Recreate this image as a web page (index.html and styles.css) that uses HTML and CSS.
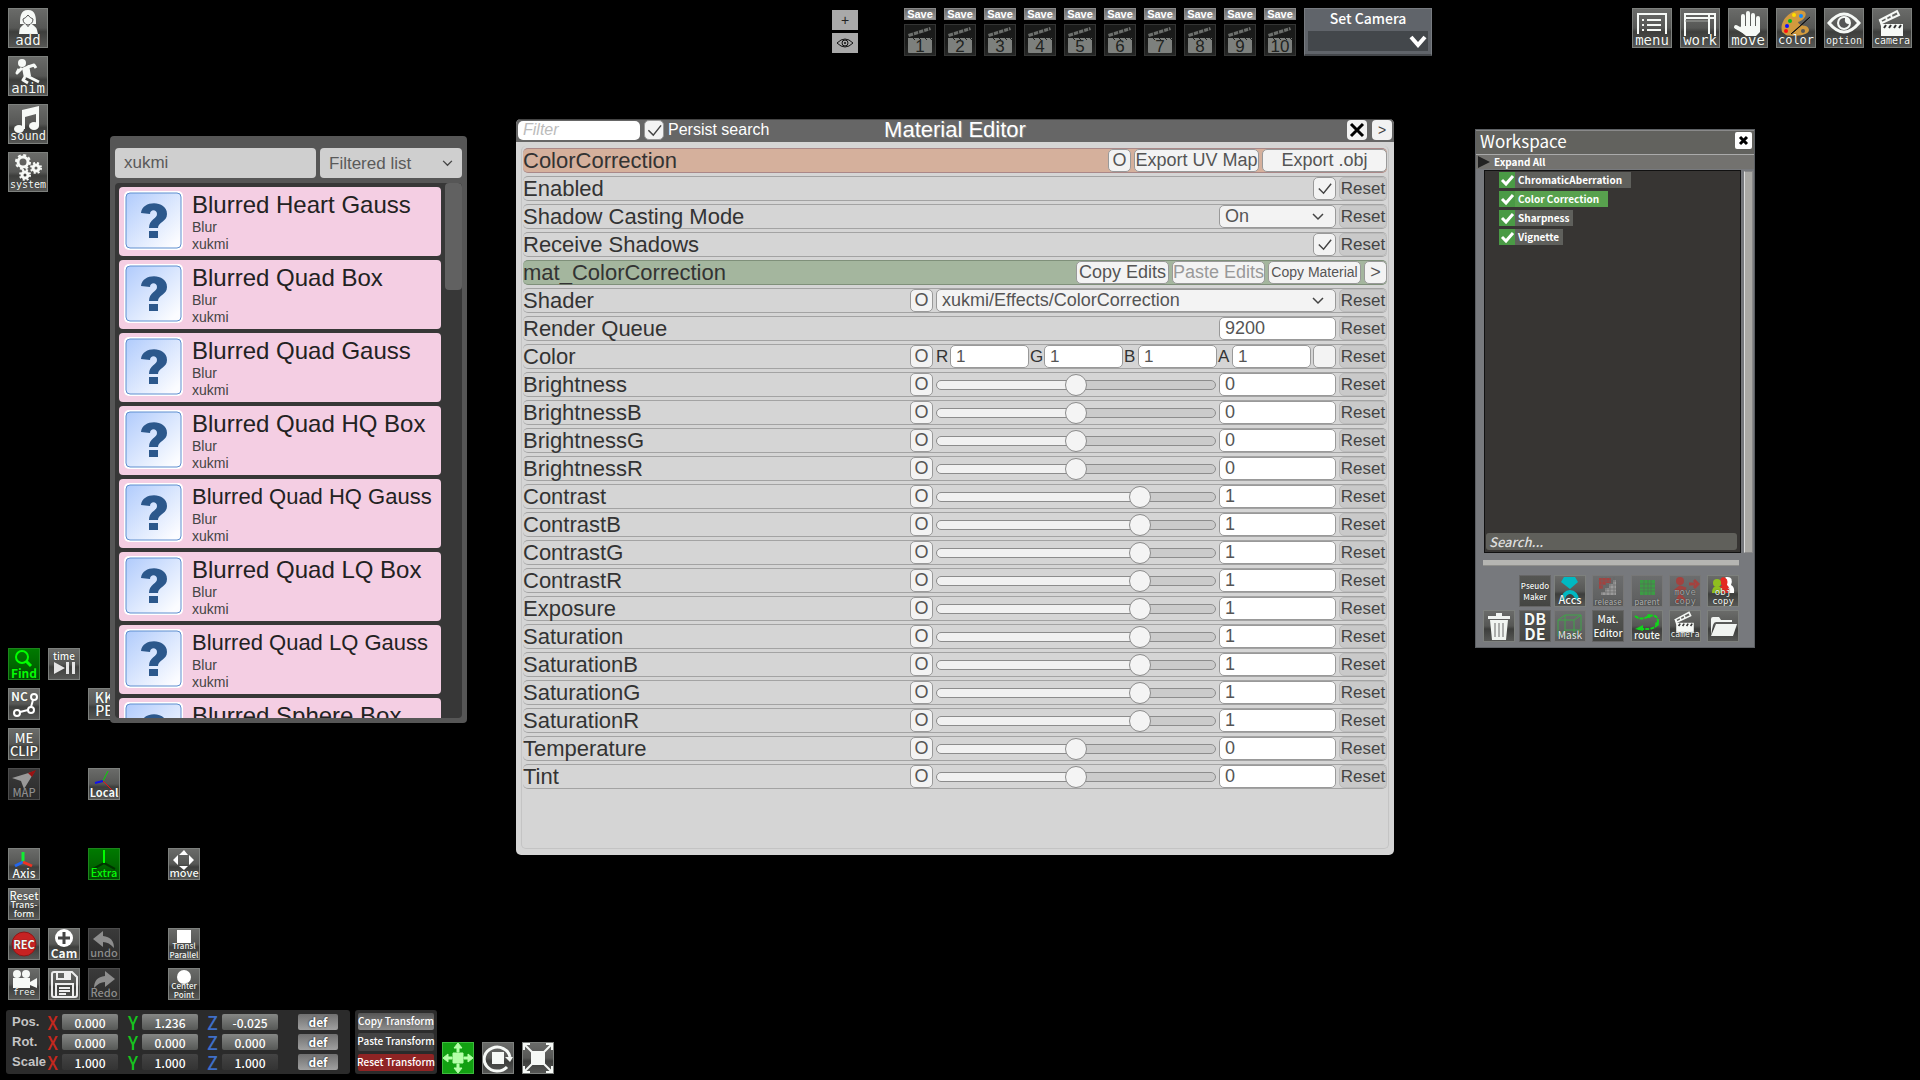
FILE: index.html
```
<!DOCTYPE html>
<html lang="en">
<head>
<meta charset="utf-8">
<title>Studio</title>
<link rel="stylesheet" href="styles.css">
</head>
<body>
<svg class="defs" aria-hidden="true">
  <defs>
    <linearGradient id="paper" x1="0" y1="0" x2="1" y2="1"><stop offset="0" stop-color="#b0cbfc"/><stop offset=".9" stop-color="#fbfcff"/></linearGradient>
  </defs>
  <symbol id="slate" viewBox="0 0 32 32">
    <path d="M4 14H28V28Q28 29 27 29H5Q4 29 4 28Z" fill="#7d807d"/>
    <path d="M4 10 26 3 27 6 5 13Z" fill="#6c6f6c"/>
    <path d="M9 8 10 12M14 6 15 10M19 4 20 8M24 3 25 7M8 13 11 16M14 13 17 16M20 13 23 16M25 13 28 16" fill="none" stroke="#1d1e1d" stroke-width="1"/>
  </symbol>
  <symbol id="clapper" viewBox="0 0 40 40">
    <path d="M9 16H31V28H9Z" fill="#f6f9f6"/>
    <path d="M8 12 25 3 27 7 10 15Z" fill="none" stroke="#f6f9f6" stroke-width="2"/>
    <path d="M14 9 15 13M19 7 20 10M8 12 10 18" stroke="#f6f9f6" stroke-width="2"/>
    <path d="M12 20 14 17M17 20 19 17M22 20 24 17M27 20 29 17" stroke="#333" stroke-width="2"/>
  </symbol>
  <symbol id="unknown" viewBox="0 0 59 59">
    <rect width="59" height="59" rx="5" fill="#fff"/>
    <rect x="2" y="2" width="55" height="55" rx="4" fill="url(#paper)" stroke="#5f8fcf"/>
    <path d="M17 22C18 9 43 9 43 23 43 31 34 31 34 37H25C25 28 33 28 33 23 33 18 26 18 26 23ZM25 40H34V47H25Z" fill="#2c588c"/>
  </symbol>
</svg>

<nav class="side-tools" aria-label="Scene">
  <button class="tile large"><svg viewBox="0 0 40 40"><path d="M12 16C12 10 12 2 20 2S28 10 28 16H25Q20 19 15 16Z" fill="#f6f9f6"/><path d="M15 11Q18 10 20 7 22 10 25 11 25 16 20 17 15 16 15 11Z" fill="#f6f9f6" stroke="#555"/><path d="M11 26Q11 18 17 16L20 19 23 16Q29 18 30 26Z" fill="#f6f9f6"/></svg><span class="mono-m">add</span></button>
  <button class="tile large"><svg viewBox="0 0 40 40"><circle cx="14" cy="7" r="4" fill="#f6f9f6"/><path d="M20 11 26 9 28 12M19 20 31 26M17 21 15 24 20 27M14 12 9 17 11 13" fill="none" stroke="#f6f9f6" stroke-width="3" stroke-linejoin="round"/><path d="M14 12 21 9 23 20 16 22Z" fill="#f6f9f6"/></svg><span class="mono-m">anim</span></button>
  <button class="tile large"><svg viewBox="0 0 40 40"><path d="M14 6 31 2V22H28V10L17 13V25H14Z" fill="#f6f9f6"/><ellipse cx="11" cy="25" rx="5" ry="4" fill="#f6f9f6"/><ellipse cx="26" cy="22" rx="5" ry="4" fill="#f6f9f6"/></svg><span class="mono-s">sound</span></button>
  <button class="tile large"><svg viewBox="0 0 40 40" fill="none" stroke="#f6f9f6"><circle cx="15" cy="10" r="5" stroke-width="3"/><circle cx="15" cy="10" r="7" stroke-width="2" stroke-dasharray="3 2.5"/><circle cx="28" cy="16" r="3" stroke-width="3"/><circle cx="28" cy="16" r="5" stroke-width="2" stroke-dasharray="2 2"/><circle cx="17" cy="23" r="3" stroke-width="3"/><circle cx="17" cy="23" r="5" stroke-width="2" stroke-dasharray="2 2"/></svg><span class="mono-xs">system</span></button>
</nav>

<div class="view-tools">
  <button aria-label="Add slot">+</button>
  <button aria-label="Toggle view"><svg viewBox="0 0 18 10" width="18" height="10"><path d="M1 5Q9-3 17 5 9 13 1 5Z" fill="none" stroke="#111"/><circle cx="9" cy="5" r="3" fill="none" stroke="#111"/><circle cx="9" cy="5" r="1" fill="#111"/></svg></button>
</div>

<header class="camera-bar">
  <div class="slot"><button class="save">Save</button><button class="tile shot"><svg><use href="#slate"/></svg><span>1</span></button></div>
  <div class="slot"><button class="save">Save</button><button class="tile shot"><svg><use href="#slate"/></svg><span>2</span></button></div>
  <div class="slot"><button class="save">Save</button><button class="tile shot"><svg><use href="#slate"/></svg><span>3</span></button></div>
  <div class="slot"><button class="save">Save</button><button class="tile shot"><svg><use href="#slate"/></svg><span>4</span></button></div>
  <div class="slot"><button class="save">Save</button><button class="tile shot"><svg><use href="#slate"/></svg><span>5</span></button></div>
  <div class="slot"><button class="save">Save</button><button class="tile shot"><svg><use href="#slate"/></svg><span>6</span></button></div>
  <div class="slot"><button class="save">Save</button><button class="tile shot"><svg><use href="#slate"/></svg><span>7</span></button></div>
  <div class="slot"><button class="save">Save</button><button class="tile shot"><svg><use href="#slate"/></svg><span>8</span></button></div>
  <div class="slot"><button class="save">Save</button><button class="tile shot"><svg><use href="#slate"/></svg><span>9</span></button></div>
  <div class="slot"><button class="save">Save</button><button class="tile shot"><svg><use href="#slate"/></svg><span>10</span></button></div>
  <div class="set-camera"><label for="camera-set">Set Camera</label><select id="camera-set"><option></option></select></div>
</header>

<nav class="main-tools" aria-label="Main">
  <button class="tile large"><svg viewBox="0 0 40 40"><path d="M6 26V6H34V26M15 12H29M15 17H29M15 22H29M10 12H12M10 17H12M10 22H12" fill="none" stroke="#f6f9f6" stroke-width="2"/></svg><span class="mono-m">menu</span></button>
  <button class="tile large"><svg viewBox="0 0 40 40"><path d="M5 28V6H35V28M5 10H35M29 6V26" fill="none" stroke="#f6f9f6" stroke-width="2"/><path d="M5 13H28" stroke="#a3a5a1"/></svg><span class="mono-m">work</span></button>
  <button class="tile large"><svg viewBox="0 0 40 40"><path d="M15 20V8M20 19V5M25 20V7M30 22V10M17 24 8 19" stroke="#f6f9f6" stroke-width="4" stroke-linecap="round"/><path d="M13 18H32V24L28 28H18L11 22Z" fill="#f6f9f6"/></svg><span class="mono-m">move</span></button>
  <button class="tile large"><svg viewBox="0 0 40 40"><path d="M6 24C3 12 16 0 27 3 33 5 28 13 22 14 24 20 32 15 33 22 33 28 15 29 10 27Z" fill="#d19a3e"/><circle cx="18" cy="7" r="2" fill="#fd0"/><circle cx="25" cy="8" r="2" fill="#18f"/><circle cx="14" cy="13" r="2" fill="#0b2"/><circle cx="11" cy="18" r="2" fill="#11f"/><circle cx="10" cy="23" r="2" fill="#f11"/><circle cx="27" cy="23" r="2" fill="#555"/><path d="M15 26 34 9 20 22Z" stroke="#111" stroke-width="1"/></svg><span class="mono-s">color</span></button>
  <button class="tile large"><svg viewBox="0 0 40 40"><path d="M5 15Q20-3 35 15 20 33 5 15Z" fill="none" stroke="#f6f9f6" stroke-width="3"/><circle cx="20" cy="15" r="7" fill="#f6f9f6"/><path d="M21 10A5 5 0 1 0 25 16Q20 16 21 10Z" fill="#555"/></svg><span class="mono-xs">option</span></button>
  <button class="tile large"><svg><use href="#clapper"/></svg><span class="mono-xs">camera</span></button>
</nav>

<div class="tool-grid">
  <button class="tile on r1 c1"><svg viewBox="0 0 32 32" fill="none" stroke="#0f0"><circle cx="14" cy="9" r="6" stroke-width="2"/><path d="M18 13 23 18" stroke-width="3"/></svg><span class="t12 b">Find</span></button>
  <button class="tile r1 c2"><svg viewBox="0 0 32 32"><path d="M6 14 17 20 6 26ZM18 14H21V26H18ZM24 14H27V26H24Z" fill="#e4e4e4"/></svg><span class="t10 top">time</span></button>
  <button class="tile r2 c1"><svg viewBox="0 0 32 32" fill="none" stroke="#fff" stroke-width="2"><circle cx="26" cy="9" r="3"/><circle cx="23" cy="22" r="3"/><circle cx="9" cy="25" r="3"/><path d="M25 12 23 19M20 22 12 24"/></svg><span class="t12 b top left">NC</span></button>
  <button class="tile r2 c3"><span class="t14 two">KK<br>PE</span></button>
  <button class="tile r3 c1"><span class="t13 two">ME<br>CLIP</span></button>
  <button class="tile off r4 c1"><svg viewBox="0 0 32 32"><path d="M4 10 27 3 16 21 13 13Z" fill="#999"/><path d="M20 5 28 2 24 9Z" fill="#911"/></svg><span class="t11">MAP</span></button>
  <button class="tile r4 c3"><svg viewBox="0 0 32 32"><path d="M15 13 20 3" stroke="#0d0"/><path d="M15 13 7 15" stroke="#11e" stroke-width="2"/><path d="M15 13 25 23" stroke="#e11"/></svg><span class="t11 b">Local</span></button>
  <button class="tile r6 c1"><svg viewBox="0 0 32 32" stroke-width="3"><path d="M15 14V4" stroke="#1e3"/><path d="M15 14 7 18" stroke="#26e"/><path d="M15 14 24 18" stroke="#e32"/></svg><span class="t12">Axis</span></button>
  <button class="tile on r6 c3"><svg viewBox="0 0 32 32"><path d="M16 15 5 21M16 15 27 21" stroke="#030" stroke-width="2"/><path d="M16 15V2" stroke="#0f0" stroke-width="2"/></svg><span class="t11">Extra</span></button>
  <button class="tile r6 c5"><svg viewBox="0 0 32 32" fill="#fff"><path d="M16 2 20 7H11ZM16 22 20 18H11ZM5 12 10 7V17ZM26 12 21 7V17Z"/></svg><span class="t11">move</span></button>
  <button class="tile r7 c1"><span class="t11 three">Reset<small>Trans-</small><small>form</small></span></button>
  <button class="tile r8 c1"><svg viewBox="0 0 32 32"><circle cx="16" cy="16" r="12" fill="#c62222" stroke="#8d1717"/></svg><span class="t11 b mid">REC</span></button>
  <button class="tile r8 c2"><svg viewBox="0 0 32 32"><circle cx="16" cy="10" r="9" fill="#fff"/><path d="M16 4V16M10 10H22" stroke="#444" stroke-width="3"/></svg><span class="t12 b">Cam</span></button>
  <button class="tile off r8 c3"><svg viewBox="0 0 32 32"><path d="M5 11 15 3V8Q26 9 26 20 21 14 15 14V19Z" fill="#8d8d8d"/></svg><span class="t11">undo</span></button>
  <button class="tile r8 c5"><svg viewBox="0 0 32 32"><path d="M9 2H23V15H9Z" fill="#fff"/></svg><span class="t8">Transl<br>Parallel</span></button>
  <button class="tile r9 c1"><svg viewBox="0 0 32 32" fill="#f6f9f6"><circle cx="9" cy="6" r="4"/><circle cx="18" cy="6" r="4"/><path d="M5 10H22V20H5ZM22 14 29 10V20L22 17Z"/></svg><span class="mono-t">free</span></button>
  <button class="tile r9 c2" aria-label="Save scene"><svg viewBox="0 0 32 32" fill="none" stroke="#eee" stroke-width="2"><path d="M4 6Q4 4 6 4H24L29 9V27Q29 29 27 29H6Q4 29 4 27ZM9 4V11H22V4M8 29V16H25V29M11 20H22M11 23H22M11 26H18"/><path d="M17 5H21V10H17Z" fill="#eee"/></svg></button>
  <button class="tile off r9 c3"><svg viewBox="0 0 32 32"><path d="M27 11 17 3V8Q6 9 6 20 11 14 17 14V19Z" fill="#8d8d8d"/></svg><span class="t11">Redo</span></button>
  <button class="tile r9 c5"><svg viewBox="0 0 32 32"><circle cx="16" cy="9" r="7" fill="#fff"/></svg><span class="t8">Center<br>Point</span></button>
</div>

<footer class="transform-bar">
  <form class="transform">
    <span class="name">Pos.</span>
    <label class="x" for="px">X</label><input id="px" value="0.000"><label class="y" for="py">Y</label><input id="py" value="1.236"><label class="z" for="pz">Z</label><input id="pz" value="-0.025"><button type="button">def</button>
    <span class="name">Rot.</span>
    <label class="x" for="rx">X</label><input id="rx" value="0.000"><label class="y" for="ry">Y</label><input id="ry" value="0.000"><label class="z" for="rz">Z</label><input id="rz" value="0.000"><button type="button">def</button>
    <span class="name">Scale</span>
    <label class="x" for="sx">X</label><input class="dim" id="sx" value="1.000"><label class="y" for="sy">Y</label><input class="dim" id="sy" value="1.000"><label class="z" for="sz">Z</label><input class="dim" id="sz" value="1.000"><button type="button">def</button>
  </form>
  <div class="transform-actions">
    <button class="copy">Copy Transform</button>
    <button class="paste">Paste Transform</button>
    <button class="reset-all">Reset Transform</button>
  </div>
  <div class="gizmos">
    <button class="tile lit" aria-label="Move"><svg viewBox="0 0 32 32" fill="#b4ffa8"><path d="M11 11H21V21H11ZM16 1 20 6H17V10H15V6H12ZM16 31 20 26H17V22H15V26H12ZM1 16 6 12V15H10V17H6V20ZM31 16 26 12V15H22V17H26V20Z" stroke="#b4ffa8"/></svg></button>
    <button class="tile" aria-label="Rotate"><svg viewBox="0 0 32 32"><path d="M10 10H22V22H10Z" fill="#f6f9f6"/><path d="M25 25A13 12 0 1 1 28 15" fill="none" stroke="#f6f9f6" stroke-width="3"/><path d="M23 15H31L28 20Z" fill="#f6f9f6"/></svg></button>
    <button class="tile" aria-label="Scale"><svg viewBox="0 0 32 32"><path d="M9 9H23V23H9Z" fill="#f6f9f6"/><path d="M3 3 29 29M29 3 3 29M2 8V2H8M24 2H30V8M30 24V30H24M8 30H2V24" fill="none" stroke="#f6f9f6" stroke-width="2"/></svg></button>
  </div>
</footer>

<section class="finder" aria-label="Item search">
  <div class="finder-head">
    <input type="text" value="xukmi" aria-label="Search items">
    <select aria-label="List"><option>Filtered list</option></select>
  </div>
  <div class="finder-body">
    <ul>
      <li><svg><use href="#unknown"/></svg><div><h3>Blurred Heart Gauss</h3><p>Blur</p><p>xukmi</p></div></li>
      <li><svg><use href="#unknown"/></svg><div><h3>Blurred Quad Box</h3><p>Blur</p><p>xukmi</p></div></li>
      <li><svg><use href="#unknown"/></svg><div><h3>Blurred Quad Gauss</h3><p>Blur</p><p>xukmi</p></div></li>
      <li><svg><use href="#unknown"/></svg><div><h3>Blurred Quad HQ Box</h3><p>Blur</p><p>xukmi</p></div></li>
      <li><svg><use href="#unknown"/></svg><div><h3 class="long">Blurred Quad HQ Gauss</h3><p>Blur</p><p>xukmi</p></div></li>
      <li><svg><use href="#unknown"/></svg><div><h3>Blurred Quad LQ Box</h3><p>Blur</p><p>xukmi</p></div></li>
      <li><svg><use href="#unknown"/></svg><div><h3 class="long">Blurred Quad LQ Gauss</h3><p>Blur</p><p>xukmi</p></div></li>
      <li><svg><use href="#unknown"/></svg><div><h3>Blurred Sphere Box</h3><p>Blur</p><p>xukmi</p></div></li>
    </ul>
    <div class="scrollbar"></div>
  </div>
</section>

<section class="editor" aria-label="Material Editor">
  <div class="editor-head">
    <div class="filter"><input type="text" placeholder="Filter" aria-label="Filter"><input type="checkbox" id="persist" checked><label for="persist">Persist search</label></div>
    <h2>Material Editor</h2>
    <div class="window-buttons">
      <button aria-label="Close"><svg viewBox="0 0 18 18" width="18" height="18"><path d="M3 3 15 15M15 3 3 15" stroke="#000" stroke-width="3"/></svg></button>
      <button>&gt;</button>
    </div>
  </div>
  <div class="rows">
    <div class="row renderer"><span class="label">ColorCorrection</span><button class="sq">O</button><button class="export">Export UV Map</button><button class="export">Export .obj</button></div>
    <div class="row"><label for="enabled">Enabled</label><input type="checkbox" id="enabled" checked><button class="reset">Reset</button></div>
    <div class="row"><label for="casting">Shadow Casting Mode</label><select id="casting" class="value"><option>On</option></select><button class="reset">Reset</button></div>
    <div class="row"><label for="receive">Receive Shadows</label><input type="checkbox" id="receive" checked><button class="reset">Reset</button></div>
    <div class="row material"><span class="label">mat_ColorCorrection</span><button class="edit">Copy Edits</button><button class="edit" disabled>Paste Edits</button><button class="edit small">Copy Material</button><button class="sq">&gt;</button></div>
    <div class="row"><label for="shader">Shader</label><button class="sq">O</button><select id="shader" class="shader"><option>xukmi/Effects/ColorCorrection</option></select><button class="reset">Reset</button></div>
    <div class="row"><label for="queue">Render Queue</label><input type="text" id="queue" class="value" value="9200"><button class="reset">Reset</button></div>
    <div class="row"><span class="label">Color</span><button class="sq">O</button><div class="channels"><label for="cr">R</label><input type="text" id="cr" value="1"><label for="cg">G</label><input type="text" id="cg" value="1"><label for="cb">B</label><input type="text" id="cb" value="1"><label for="ca">A</label><input type="text" id="ca" value="1"></div><button class="sq" aria-label="Pick color"></button><button class="reset">Reset</button></div>
    <div class="row"><label for="s1">Brightness</label><button class="sq">O</button><input type="range" id="s1" min="-2" max="2" value="0" style="--fill:50%"><input type="text" class="value" aria-label="Brightness value" value="0"><button class="reset">Reset</button></div>
    <div class="row"><label for="s2">BrightnessB</label><button class="sq">O</button><input type="range" id="s2" min="-2" max="2" value="0" style="--fill:50%"><input type="text" class="value" aria-label="BrightnessB value" value="0"><button class="reset">Reset</button></div>
    <div class="row"><label for="s3">BrightnessG</label><button class="sq">O</button><input type="range" id="s3" min="-2" max="2" value="0" style="--fill:50%"><input type="text" class="value" aria-label="BrightnessG value" value="0"><button class="reset">Reset</button></div>
    <div class="row"><label for="s4">BrightnessR</label><button class="sq">O</button><input type="range" id="s4" min="-2" max="2" value="0" style="--fill:50%"><input type="text" class="value" aria-label="BrightnessR value" value="0"><button class="reset">Reset</button></div>
    <div class="row"><label for="s5">Contrast</label><button class="sq">O</button><input type="range" id="s5" min="-2" max="2" value="1" style="--fill:75%"><input type="text" class="value" aria-label="Contrast value" value="1"><button class="reset">Reset</button></div>
    <div class="row"><label for="s6">ContrastB</label><button class="sq">O</button><input type="range" id="s6" min="-2" max="2" value="1" style="--fill:75%"><input type="text" class="value" aria-label="ContrastB value" value="1"><button class="reset">Reset</button></div>
    <div class="row"><label for="s7">ContrastG</label><button class="sq">O</button><input type="range" id="s7" min="-2" max="2" value="1" style="--fill:75%"><input type="text" class="value" aria-label="ContrastG value" value="1"><button class="reset">Reset</button></div>
    <div class="row"><label for="s8">ContrastR</label><button class="sq">O</button><input type="range" id="s8" min="-2" max="2" value="1" style="--fill:75%"><input type="text" class="value" aria-label="ContrastR value" value="1"><button class="reset">Reset</button></div>
    <div class="row"><label for="s9">Exposure</label><button class="sq">O</button><input type="range" id="s9" min="-2" max="2" value="1" style="--fill:75%"><input type="text" class="value" aria-label="Exposure value" value="1"><button class="reset">Reset</button></div>
    <div class="row"><label for="s10">Saturation</label><button class="sq">O</button><input type="range" id="s10" min="-2" max="2" value="1" style="--fill:75%"><input type="text" class="value" aria-label="Saturation value" value="1"><button class="reset">Reset</button></div>
    <div class="row"><label for="s11">SaturationB</label><button class="sq">O</button><input type="range" id="s11" min="-2" max="2" value="1" style="--fill:75%"><input type="text" class="value" aria-label="SaturationB value" value="1"><button class="reset">Reset</button></div>
    <div class="row"><label for="s12">SaturationG</label><button class="sq">O</button><input type="range" id="s12" min="-2" max="2" value="1" style="--fill:75%"><input type="text" class="value" aria-label="SaturationG value" value="1"><button class="reset">Reset</button></div>
    <div class="row"><label for="s13">SaturationR</label><button class="sq">O</button><input type="range" id="s13" min="-2" max="2" value="1" style="--fill:75%"><input type="text" class="value" aria-label="SaturationR value" value="1"><button class="reset">Reset</button></div>
    <div class="row"><label for="s14">Temperature</label><button class="sq">O</button><input type="range" id="s14" min="-2" max="2" value="0" style="--fill:50%"><input type="text" class="value" aria-label="Temperature value" value="0"><button class="reset">Reset</button></div>
    <div class="row"><label for="s15">Tint</label><button class="sq">O</button><input type="range" id="s15" min="-2" max="2" value="0" style="--fill:50%"><input type="text" class="value" aria-label="Tint value" value="0"><button class="reset">Reset</button></div>
  </div>
</section>

<section class="workspace" aria-label="Workspace">
  <div class="workspace-head"><h2>Workspace</h2><button aria-label="Close"><svg viewBox="0 0 17 17" width="17" height="17"><path d="M5 5 12 12M12 5 5 12" stroke="#000" stroke-width="3"/></svg></button></div>
  <button class="expand"><svg viewBox="0 0 12 12" width="12" height="12"><path d="M0 0 12 6 0 12Z" fill="#222"/></svg>Expand All</button>
  <div class="workspace-body">
    <div class="tree">
      <ul>
        <li><input type="checkbox" id="n1" checked><label for="n1" class="wide">ChromaticAberration</label></li>
        <li class="selected"><input type="checkbox" id="n2" checked><label for="n2" class="wide">Color Correction</label></li>
        <li><input type="checkbox" id="n3" checked><label for="n3">Sharpness</label></li>
        <li><input type="checkbox" id="n4" checked><label for="n4">Vignette</label></li>
      </ul>
      <input type="text" placeholder="Search..." aria-label="Search workspace">
    </div>
    <div class="vbar"></div>
  </div>
  <div class="hbar"></div>
  <div class="workspace-tools">
    <button class="tile flat c2"><span class="t8 mid lh11">Pseudo<br>Maker</span></button>
    <button class="tile"><svg viewBox="0 0 32 32"><path d="M10 2H21L24 7 16 14 7 7Z" fill="#00b9c2"/><path d="M9 25A7 8 0 1 1 23 25" fill="none" stroke="#00b9c2" stroke-width="4"/></svg><span class="t11">Accs</span></button>
    <button class="tile ghost"><svg viewBox="0 0 32 32"><path d="M7 3H19V8H14V10H11V14H7Z" fill="#a3423f"/><path d="M21 5H24V20H9V17H13V13H17V9H21Z" fill="#9b9b9b"/><path d="M10 2V20M14 2V20M18 2V20M22 2V20M6 6H25M6 10H25M6 14H25M6 17H25" stroke="#646464" stroke-width=".6"/></svg><span class="t8">release</span></button>
    <button class="tile ghost"><svg viewBox="0 0 32 32"><path d="M9 5H24V20H9Z" fill="#3c9c45"/><path d="M13 5V20M17 5V20M20 5V20M9 9H24M9 13H24M9 16H24" stroke="#5c665c" stroke-width=".6"/></svg><span class="t8">parent</span></button>
    <button class="tile ghost"><svg viewBox="0 0 32 32"><circle cx="11" cy="6" r="4" fill="#a3423f"/><path d="M6 16 11 12 17 14M11 12V20L7 28M11 20 17 27M20 9H26M25 5 29 9 25 13" fill="none" stroke="#a3423f" stroke-width="3"/></svg><span class="mono-t tight">move<br>copy</span></button>
    <button class="tile"><svg viewBox="0 0 32 32"><path d="M15 18Q15 12 18 11 14 6 19 2 27 1 24 10 28 12 27 18Z" fill="#fff"/><path d="M11 18Q11 12 15 11 11 4 16 2 22 3 20 10 23 12 22 18Z" fill="#e32a22"/><circle cx="10" cy="8" r="4" fill="#8fbf1f"/><path d="M5 18Q5 11 10 11T15 18Z" fill="#8fbf1f"/></svg><span class="mono-t tight">obj<br>copy</span></button>
    <button class="tile c1" aria-label="Delete"><svg viewBox="0 0 32 32"><path d="M7 10H25L23 30H9ZM5 6H27V9H5ZM13 3H19V6H13Z" fill="#f1f4f1"/><path d="M12 13V27M16 13V27M20 13V27" stroke="#666" stroke-width="1"/></svg></button>
    <button class="tile flat"><span class="t16 b mid">DB<br>DE</span></button>
    <button class="tile ghost lighter"><svg viewBox="0 0 32 32" fill="none" stroke="#3fa548"><path d="M4 10H20V26H4ZM11 5H27V20H11ZM4 10 11 5M20 10 27 5M4 26 11 20M20 26 27 20"/></svg><span class="t10">Mask</span></button>
    <button class="tile flat"><span class="t10 mid lh15">Mat.<br>Editor</span></button>
    <button class="tile"><svg viewBox="0 0 32 32"><path d="M4 6Q10 11 18 6 27 4 27 12 26 18 18 19L7 19" fill="none" stroke="#12d31c" stroke-width="2" stroke-dasharray="4 1"/><path d="M4 19 12 15V21Z" fill="#12d31c"/><circle cx="18" cy="6" r="2" fill="#12d31c"/><circle cx="26" cy="14" r="2" fill="#12d31c"/></svg><span class="t10">route</span></button>
    <button class="tile"><svg><use href="#clapper"/></svg><span class="mono-c">camera</span></button>
    <button class="tile" aria-label="Open folder"><svg viewBox="0 0 32 32" fill="#f1f4f1"><path d="M4 25V9Q4 7 6 7H12L14 10H25V12H9Q7 12 6 15Z"/><path d="M9 14H30L26 26H4Z"/></svg></button>
  </div>
</section>
</body>
</html>
```
FILE: styles.css
```
:root {
  --ui: "Liberation Sans", Arial, sans-serif;
  --gothic: "Noto Sans CJK JP", "Noto Sans", sans-serif;
  --mono: "DejaVu Sans Mono", monospace;
  --check: url("data:image/svg+xml,%3Csvg xmlns='http://www.w3.org/2000/svg' viewBox='0 0 20 20'%3E%3Cpath d='M4 10L9 15L17 5' fill='none' stroke='%23444' stroke-width='1.5'/%3E%3C/svg%3E");
  --chevron: url("data:image/svg+xml,%3Csvg xmlns='http://www.w3.org/2000/svg' viewBox='0 0 12 8'%3E%3Cpath d='M1 1L6 6L11 1' fill='none' stroke='%23444' stroke-width='1.5'/%3E%3C/svg%3E");
}
* { box-sizing: border-box; }
body { margin: 0; min-height: 100vh; background: #000; font-family: var(--ui); overflow: hidden; position: relative; }
button, input, select { font: inherit; color: inherit; margin: 0; padding: 0; border: 0; border-radius: 0; appearance: none; min-width: 0; }
h2, h3, p, ul { margin: 0; padding: 0; font-weight: 400; }
ul { list-style: none; }
.defs { position: absolute; width: 0; height: 0; }

/* Icon tiles */
.tile {
  display: grid; width: 32px; height: 32px; overflow: hidden; color: #f6f9f6;
  border: 1px solid #7d807d;
  background: linear-gradient(#6a6b69, #565755 50%, #3d3e3c 60%, #565755);
  font-family: var(--gothic); font-weight: 500; text-align: center; white-space: nowrap;
}
.tile > * { grid-area: 1 / 1; }
.tile > svg { width: 32px; height: 32px; margin: -1px; }
.tile > span { align-self: end; justify-self: center; line-height: 13px; text-shadow: 0 0 1px #222; }
.tile.large { width: 40px; height: 40px; }
.tile.large > svg { width: 40px; height: 40px; }
.tile.on { background: linear-gradient(#007a00, #006800 50%, #004a00); border-color: #1c851c; color: #0f0; }
.tile.off { background: linear-gradient(#3a3a3a, #2b2b2b); border-color: #4c4c4c; color: #8d8d8d; }
.tile.lit { background: #12a012; border-color: #3dbb3d; }
.tile.flat { background: linear-gradient(#555653, #444542); border-color: #666; }
.tile.ghost { background: linear-gradient(#6c6d6e, #5c5d5d); border-color: #777; color: #a6a7a7; }
.tile.ghost.lighter { color: #ddd; }
.tile > .top { align-self: start; }
.tile > .left { justify-self: start; padding-left: 2px; }
.tile > .mid { align-self: center; }
.tile > .two { align-self: center; line-height: 13px; }
.tile > .three { align-self: center; line-height: 10px; }
.three small { display: block; font-size: 9px; line-height: 9px; }
.tile > .tight { line-height: 9px; }
.tile > .lh15 { line-height: 14px; }
.tile > .t8 { line-height: 9px; }
.tile > .t8.lh11 { line-height: 11px; }
.t8 { font-size: 8px; }
.t10 { font-size: 10px; }
.t11 { font-size: 11px; }
.t12 { font-size: 12px; }
.t13 { font-size: 13px; }
.t14 { font-size: 14px; }
.tile > .t16 { font-size: 16px; line-height: 15px; }
.b { font-weight: 700; }
.mono-m { font: 14px var(--mono); }
.mono-s { font: 12px var(--mono); }
.mono-xs { font: 10px var(--mono); }
.mono-t { font: 9px var(--mono); }
.mono-c { font: 8px var(--mono); }

.side-tools { position: absolute; left: 8px; top: 8px; display: grid; gap: 8px; }
.main-tools { position: absolute; right: 8px; top: 8px; display: flex; gap: 8px; }
.view-tools { position: absolute; left: 832px; top: 10px; display: grid; gap: 3px; }
.view-tools button { width: 26px; height: 20px; background: #a9a9a9; font-size: 14px; line-height: 20px; display: grid; place-items: center; color: #222; }

.camera-bar { position: absolute; left: 904px; top: 8px; display: flex; gap: 8px; }
.slot { display: grid; gap: 4px; align-content: start; }
.save { width: 32px; height: 12px; font: 700 11px/10px var(--ui); color: #fff; background: linear-gradient(#666, #999); border: 1px solid #888; }
.tile.shot { background: linear-gradient(#1a1b1a, #1a1b1a 60%, #252625); border-color: #343534; color: #222422; font-family: var(--ui); font-size: 17px; }
.tile.shot > span { line-height: 15px; padding-bottom: 1px; text-shadow: none; }
.set-camera { width: 128px; height: 48px; padding: 0 3px 3px; display: grid; grid-template-rows: 22px 20px; background: #60646a; border: 1px solid #777b80; border-bottom: 2px solid #44474b; }
.set-camera label { font: 500 14px/18px var(--gothic); color: #fff; text-align: center; }
.set-camera select { background: #43474b url("data:image/svg+xml,%3Csvg xmlns='http://www.w3.org/2000/svg' viewBox='0 0 18 13'%3E%3Cpath d='M2 2L9 10L16 2' fill='none' stroke='white' stroke-width='4'/%3E%3C/svg%3E") no-repeat right 1px center / 18px 13px; }

.tool-grid { position: absolute; left: 8px; bottom: 80px; display: grid; gap: 8px; grid-template-columns: repeat(5, 32px); grid-template-rows: repeat(9, 32px); }
.r1 { grid-row: 1; } .r2 { grid-row: 2; } .r3 { grid-row: 3; } .r4 { grid-row: 4; }
.r6 { grid-row: 6; } .r7 { grid-row: 7; } .r8 { grid-row: 8; } .r9 { grid-row: 9; }
.c1 { grid-column: 1; } .c2 { grid-column: 2; } .c3 { grid-column: 3; } .c5 { grid-column: 5; }

/* Transform bar */
.transform-bar { position: absolute; left: 6px; bottom: 6px; display: flex; gap: 5px; align-items: end; font-family: var(--gothic); }
.transform { display: grid; grid-template-columns: 36px 14px 56px 24px 56px 24px 56px 60px; grid-auto-rows: 16px; row-gap: 4px; padding: 4px 12px 4px 6px; background: #2b2b2b; border-radius: 3px; color: #fff; align-items: center; justify-items: center; }
.transform .name { justify-self: start; font: 700 13px/14px var(--ui); color: #c4c4c4; }
.transform label { font: 500 18px/14px var(--gothic); justify-self: end; padding-right: 4px; }
.x { color: #c5281e; } .y { color: #16c51e; } .z { color: #3f6fc8; }
.transform input { width: 56px; height: 16px; text-align: center; font-size: 12px; font-weight: 500; line-height: 14px; border-radius: 2px; background: linear-gradient(#858785, #565856); }
.transform input.dim { background: linear-gradient(#444, #333); }
.transform button { width: 40px; height: 16px; justify-self: end; font: 700 12px/12px var(--gothic); border-radius: 2px; background: linear-gradient(#707070, #a0a0a0); text-shadow: 0 0 2px #000; }
.transform-actions { display: grid; gap: 3px; padding: 3px; width: 82px; background: #2b2b2b; border-radius: 3px; }
.transform-actions button { height: 17px; color: #fff; font-weight: 500; font-size: 10px; line-height: 15px; white-space: nowrap; border-radius: 2px; display: grid; justify-content: center; align-content: start; }
.transform-actions .copy { background: linear-gradient(#555, #8c8c8c); }
.transform-actions .paste { background: #444; height: 18px; }
.transform-actions .reset-all { background: #8f2424; }
.gizmos { display: flex; gap: 8px; }

/* Item finder */
.finder { position: absolute; left: 110px; top: 136px; width: 357px; height: 587px; padding: 12px 5px 5px; display: flex; flex-direction: column; gap: 5px; background: #565656; border-radius: 4px; }
.finder-head { display: grid; grid-template-columns: 201px 1fr; gap: 4px; flex: none; font-size: 17px; color: #5a5a5a; }
.finder-head input, .finder-head select { height: 30px; padding: 0 9px; border-radius: 4px; background-color: #cfcfcf; }
.finder-head select { background-image: var(--chevron); background-repeat: no-repeat; background-position: right 9px center; background-size: 11px 7px; }
.finder-body { flex: 1; min-height: 0; overflow: hidden; display: flex; justify-content: space-between; background: #373737; border-radius: 4px; }
.finder-body ul { width: 322px; margin: 4px 0 0 4px; display: grid; grid-template-columns: 100%; gap: 4px; align-content: start; }
.finder-body li { height: 69px; display: flex; gap: 9px; padding: 4px 5px; background: #f4cee3; border-radius: 4px; }
.finder-body li svg { width: 59px; height: 59px; flex: none; }
.finder-body li div { min-width: 0; white-space: nowrap; color: #444; }
.finder-body h3 { font-size: 24px; line-height: 28px; color: #222; }
.finder-body h3.long { font-size: 22px; }
.finder-body p { font-size: 14px; line-height: 17px; }
.scrollbar { width: 17px; height: 107px; border-radius: 4px; background: #616161; }

/* Material editor */
.editor { position: absolute; left: 516px; top: 119px; width: 878px; height: 736px; display: flex; flex-direction: column; background: #d5d5d5; border-radius: 5px; overflow: hidden; color: #333; }
.editor-head { height: 23px; flex: none; display: grid; grid-template-columns: 1fr auto 1fr; align-items: start; padding: 0 2px; background: #666; border-top: 1px solid #444; color: #fff; }
.filter { display: flex; align-items: center; gap: 4px; font-size: 16px; }
.filter input[type="text"] { width: 122px; height: 19px; padding: 0 5px; border-radius: 5px; background: #fff; color: #333; }
.filter input::placeholder { color: #bbb; font-style: italic; opacity: 1; }
.filter label { line-height: 18px; }
.editor-head h2 { font-size: 22px; line-height: 20px; text-shadow: 1px 1px 0 #888; }
.window-buttons { display: flex; gap: 5px; justify-content: end; font-size: 14px; color: #444; }
.window-buttons button { width: 20px; height: 20px; display: grid; place-items: center; background: #f2f2f2; border-radius: 4px; }
.rows { flex: 1; margin: 4px 5px 6px; padding: 2px 1px; border: 0 solid #c4c4c4; border-width: 0 1px 1px; border-radius: 5px; display: flex; flex-direction: column; gap: 3px; }
.row { height: 25px; flex: none; display: flex; align-items: center; gap: 3px; border: solid #a3a3a3; border-width: 1px 0; border-radius: 5px; font-size: 18px; color: #555; }
.row.renderer { background: #d5b09c; border-color: #a88; }
.row.material { background: #a4b69e; border-color: #7f907a; }
.row > label:first-child, .row > .label { flex: 1; font-size: 22px; line-height: 23px; color: #333; white-space: nowrap; }
.row button, .row select, .row input[type="text"] { height: 23px; line-height: 21px; border: 1px solid #999; border-radius: 5px; flex: none; white-space: nowrap; }
.row button, .row select { background-color: #f3f3f3; }
.row .sq { width: 23px; }
.row .export { width: 125px; }
.row .edit { width: 93px; }
.row .edit.small { font-size: 14px; }
.row button:disabled { color: #999; }
.row .reset { width: 48px; font-size: 17px; color: #444; background: #c9c9c9; border-color: #bbb; }
.row input[type="text"] { background: #fff; padding: 0 5px; color: #555; }
.row .value { width: 117px; }
.row select { padding: 0 5px; background-image: var(--chevron); background-repeat: no-repeat; background-position: right 11px center; background-size: 12px 8px; }
.row .shader { width: 400px; }
.editor input[type="checkbox"] { width: 23px; height: 23px; border: 1px solid #999; border-radius: 5px; background: #f3f3f3 var(--check) center / 19px 19px no-repeat; }
.editor .filter input[type="checkbox"] { width: 20px; height: 20px; }
.channels { width: 374px; display: grid; grid-template-columns: repeat(4, 13px 79px); column-gap: 1px; align-items: center; font-size: 17px; color: #333; }
.row input[type="range"] { width: 280px; height: 22px; background: none; }
input[type="range"]::-webkit-slider-runnable-track { height: 10px; border: 1px solid #8c8c8c; border-radius: 5px; background: linear-gradient(90deg, #f1f1f1 var(--fill), #cbcbcb var(--fill)); }
input[type="range"]::-webkit-slider-thumb { appearance: none; width: 22px; height: 22px; margin-top: -7px; border: 1px solid #8c8c8c; border-radius: 50%; background: #f4f4f4; }

/* Workspace */
.workspace { position: absolute; left: 1475px; top: 129px; width: 280px; height: 519px; display: flex; flex-direction: column; background: #77797d; border: 1px solid #5d6064; color: #fff; font-family: var(--gothic); }
.workspace-head { height: 24px; flex: none; display: flex; align-items: start; justify-content: space-between; padding: 1px 2px 0 4px; background: #62625e; border-top: 1px solid #8a8a8a; }
.workspace-head h2 { font-size: 17px; line-height: 18px; }
.workspace-head button { width: 17px; height: 17px; display: grid; background: #fff; border-radius: 2px; }
.expand { height: 15px; flex: none; display: flex; align-items: center; gap: 4px; padding-left: 2px; background: #73726f; border-top: 1px solid #aaa; font-weight: 700; font-size: 10px; line-height: 14px; }
.workspace-body { flex: 1; min-height: 0; display: flex; gap: 3px; padding: 1px 1px 0 8px; }
.tree { flex: 1; display: flex; flex-direction: column; justify-content: space-between; padding: 1px 3px 2px 1px; background: #373533; border: 1px solid #111; }
.tree ul { display: grid; gap: 3px; justify-items: start; padding-left: 13px; }
.tree li { display: flex; background: #5f605c; font-weight: 700; font-size: 10px; line-height: 16px; }
.tree li label { padding: 0 4px 0 3px; }
.tree li label.wide { padding-right: 9px; }
.tree li.selected { background: #58a14e; }
.tree input[type="checkbox"] { width: 16px; height: 16px; background: #4a9a45 url("data:image/svg+xml,%3Csvg xmlns='http://www.w3.org/2000/svg' viewBox='0 0 16 16'%3E%3Cpath d='M3 8L7 12L14 4' fill='none' stroke='white' stroke-width='3'/%3E%3C/svg%3E") center / 16px 16px; }
.tree input[type="text"] { height: 17px; padding: 0 3px; border-radius: 3px; background: #60605b; font: italic 500 13px/17px var(--gothic); }
.tree input::placeholder { color: #ddd; opacity: 1; }
.vbar { width: 9px; background: #aaa9a5; border: 1px solid #888; border-left-color: #ddd; margin-top: 1px; }
.hbar { height: 6px; flex: none; margin: 7px 15px 9px 7px; background: #b5b5b2; border-bottom: 1px solid #8f8f8c; }
.workspace-tools { display: grid; grid-template-columns: 36px 35px 38px 39px 38px 38px 32px; row-gap: 3px; padding: 0 0 5px 7px; }
```
